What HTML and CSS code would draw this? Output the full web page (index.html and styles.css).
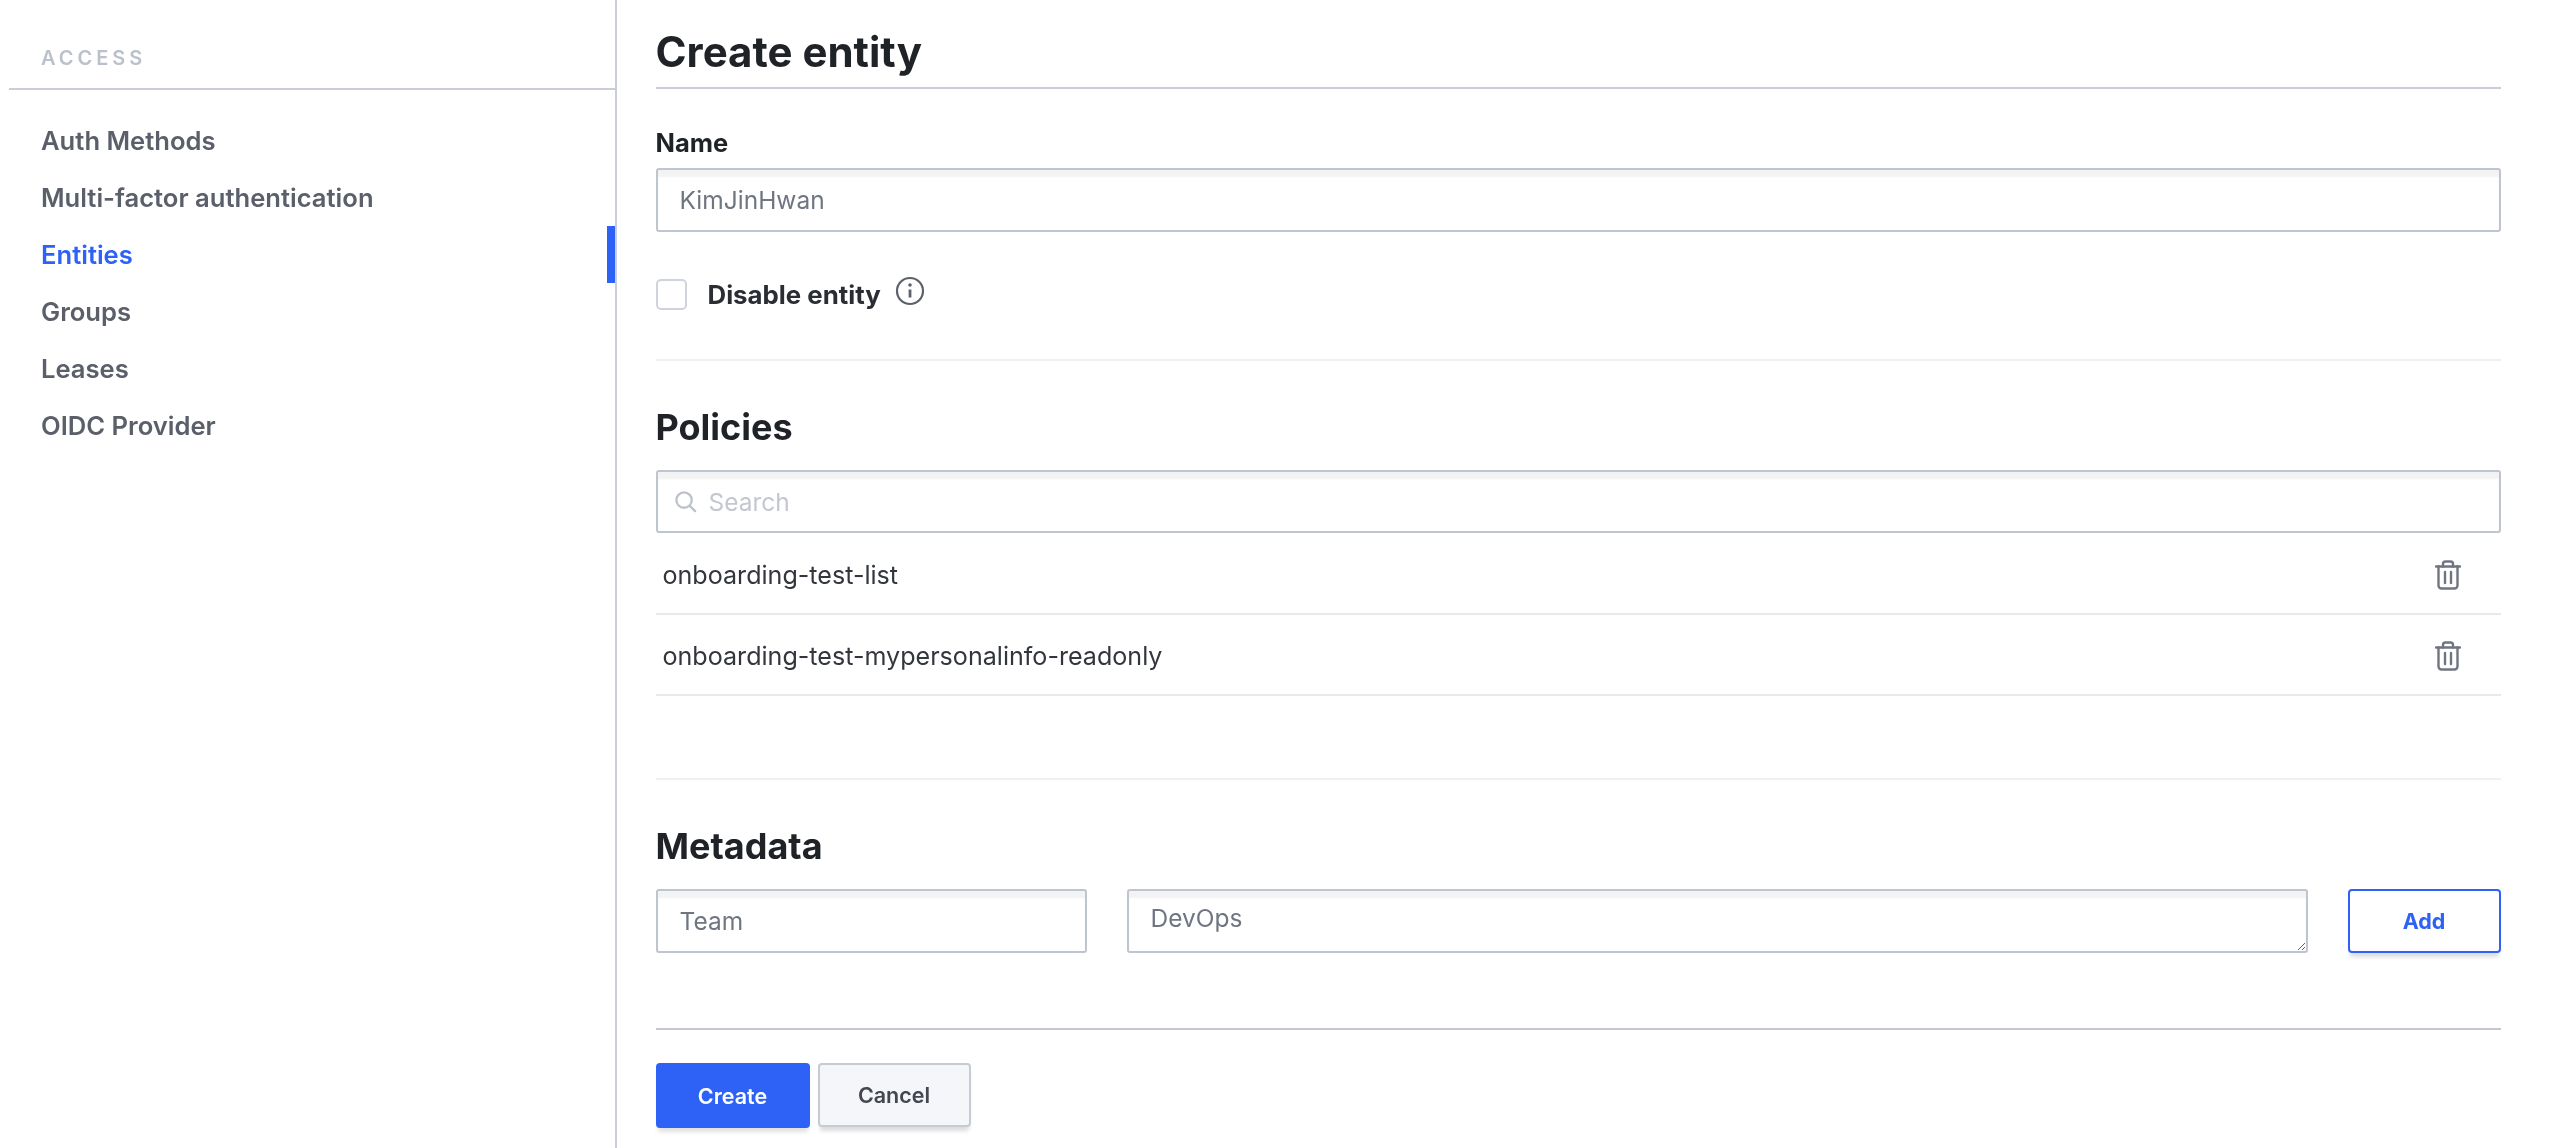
FILE: index.html
```html
<!DOCTYPE html>
<html lang="en">
<head>
<meta charset="utf-8">
<title>Create entity</title>
<link rel="stylesheet" href="styles.css">
</head>
<body>
<div class="page">
  <aside class="sidebar">
    <div class="side-head"><span class="side-title">ACCESS</span></div>
    <nav class="side-nav">
      <a class="nav-item">Auth Methods</a>
      <a class="nav-item">Multi-factor authentication</a>
      <a class="nav-item active">Entities</a>
      <a class="nav-item">Groups</a>
      <a class="nav-item">Leases</a>
      <a class="nav-item">OIDC Provider</a>
    </nav>
  </aside>
  <main class="main">
    <h1 class="title">Create entity</h1>
    <label class="label">Name</label>
    <input class="input name-input" type="text" value="KimJinHwan">
    <div class="check-row">
      <span class="checkbox"></span>
      <span class="check-label">Disable entity</span>
      <svg class="info" viewBox="0 0 30 30" fill="none" stroke="#5c616b" stroke-width="2.2"><circle cx="15" cy="15" r="13"/><path d="M15 13.5v8" stroke-width="2.8"/><circle cx="15" cy="9" r="1.8" fill="#5c616b" stroke="none"/></svg>
    </div>
    <hr class="divider first">
    <h2 class="section">Policies</h2>
    <div class="input search">
      <svg class="search-icon" viewBox="0 0 24 24" fill="none" stroke="#bcc2cd" stroke-width="2.4" stroke-linecap="round"><circle cx="10.5" cy="10.5" r="8"/><path d="M16.5 16.5l5.5 5.5"/></svg>
      <input class="search-field" type="text" placeholder="Search">
    </div>
    <ul class="list">
      <li class="row"><span>onboarding-test-list</span>
        <svg class="trash" viewBox="0 0 26 30" fill="none" stroke="#6f7682" stroke-width="2.4" stroke-linecap="round" stroke-linejoin="round"><path d="M1 6.500h24"/><path d="M8 6.500V4a2.500 2.500 0 0 1 2.500-2.500h5A2.500 2.500 0 0 1 18 4v2.500"/><path d="M3.500 6.500V25.500a3 3 0 0 0 3 3h13a3 3 0 0 0 3-3V6.500"/><path d="M10 12v11M16 12v11"/></svg>
      </li>
      <li class="row"><span>onboarding-test-mypersonalinfo-readonly</span>
        <svg class="trash" viewBox="0 0 26 30" fill="none" stroke="#6f7682" stroke-width="2.4" stroke-linecap="round" stroke-linejoin="round"><path d="M1 6.500h24"/><path d="M8 6.500V4a2.500 2.500 0 0 1 2.500-2.500h5A2.500 2.500 0 0 1 18 4v2.500"/><path d="M3.500 6.500V25.500a3 3 0 0 0 3 3h13a3 3 0 0 0 3-3V6.500"/><path d="M10 12v11M16 12v11"/></svg>
      </li>
    </ul>
    <hr class="divider second">
    <h2 class="section">Metadata</h2>
    <div class="meta-row">
      <input class="input" type="text" value="Team">
      <textarea class="input area">DevOps</textarea>
      <button class="btn add">Add</button>
    </div>
    <hr class="rule">
    <div class="actions">
      <button class="btn create">Create</button>
      <button class="btn cancel">Cancel</button>
    </div>
  </main>
</div>
</body>
</html>
```
FILE: styles.css
```css
* { box-sizing: border-box; }
html, body { margin: 0; height: 100%; background: #fff; overflow: hidden; }
body { font-family: Inter, "Liberation Sans", sans-serif; color: #1f2328; }
.page { display: flex; height: 1148px; filter: blur(0.7px); }

.sidebar { width: 617px; flex: none; border-right: 2px solid #c8cdd6; }
.side-head { margin-left: 9px; height: 90px; padding: 45px 0 0 32px; border-bottom: 2px solid #c8cdd6; }
.side-title { display: block; font-size: 20px; line-height: 27px; font-weight: 600; letter-spacing: 4px; color: #bac1cc; }
.side-nav { display: flex; flex-direction: column; padding-top: 22px; }
.nav-item { display: flex; align-items: center; height: 57px; padding-left: 41px; font-size: 25.6px; font-weight: 600; color: #5a5f69; }
.nav-item.active { color: #2e62f6; border-right: 8px solid #2e62f6; }

.main { flex: 1; padding: 0 67.5px 0 38.5px; min-width: 0; }
.title { margin: 0; height: 89px; padding-top: 26px; font-size: 42px; line-height: 52px; font-weight: 700; border-bottom: 2px solid #c8cdd6; }
.label { display: block; margin-top: 38px; font-size: 25.5px; line-height: 32px; font-weight: 700; }
.input { display: block; width: 100%; height: 64px; padding: 0 22px; border: 2px solid #bfc5cf; border-radius: 3px; background: #fff; box-shadow: inset 0 7px 2px rgba(10,10,10,.05); font: 400 24.5px Inter, "Liberation Sans", sans-serif; color: #6f7682; outline: none; }
.name-input { margin-top: 9px; }

.check-row { display: flex; align-items: center; height: 32px; margin-top: 46px; }
.checkbox { width: 31px; height: 31px; flex: none; border: 2px solid #cfd3db; border-radius: 5px; background: #fff; }
.check-label { margin-left: 21px; font-size: 25.8px; line-height: 32px; font-weight: 700; position: relative; top: 1px; color: #2a2e34; }
.info { width: 30px; height: 30px; margin-left: 14px; flex: none; position: relative; top: -3px; }

.divider { margin: 0; border: 0; height: 2px; background: #eef0f3; }
.divider.first { margin-top: 49px; }
.divider.second { margin-top: 82px; }
.section { margin: 42px 0 19px; font-size: 36px; line-height: 48px; font-weight: 700; }

.search { display: flex; align-items: center; gap: 10px; height: 63px; padding: 0 16px; }
.search-icon { width: 23px; height: 23px; flex: none; }
.search-field { flex: 1; min-width: 0; border: 0; outline: 0; background: transparent; font: 400 24.5px Inter, "Liberation Sans", sans-serif; color: #6f7682; }
.search-field::placeholder { color: #c2c7d0; opacity: 1; }

.list { list-style: none; margin: 1px 0 0; padding: 0; }
.row { display: flex; align-items: center; justify-content: space-between; height: 81px; padding: 2px 40px 0 7px; border-bottom: 2px solid #e7e9ed; font-size: 25.1px; color: #33373d; }
.trash { width: 26px; height: 30px; flex: none; }

.meta-row { display: grid; grid-template-columns: 431px 1fr 153px; gap: 40px; height: 64px; }
.area { padding: 12px 22px; line-height: 30px; resize: vertical; }

.rule { margin: 75px 0 0; border: 0; height: 2px; background: #c2c7d0; }
.actions { display: flex; gap: 8px; margin-top: 33px; }

.btn { height: 64px; border-radius: 4px; font: 600 21.5px Inter, "Liberation Sans", sans-serif; cursor: pointer; }
.add { border: 2.5px solid #2e62f6; background: #fff; color: #2e62f6; font-weight: 700; box-shadow: 0 6px 4px -2px rgba(10,10,10,.14); }
.create { width: 154px; height: 65px; border: 0; background: #2e62f6; color: #fff; box-shadow: 0 6px 4px -2px rgba(10,10,10,.12); }
.cancel { width: 153px; border: 2px solid #c6cad3; background: #f5f6f9; color: #43474f; box-shadow: 0 6px 4px -2px rgba(10,10,10,.14); }
```
